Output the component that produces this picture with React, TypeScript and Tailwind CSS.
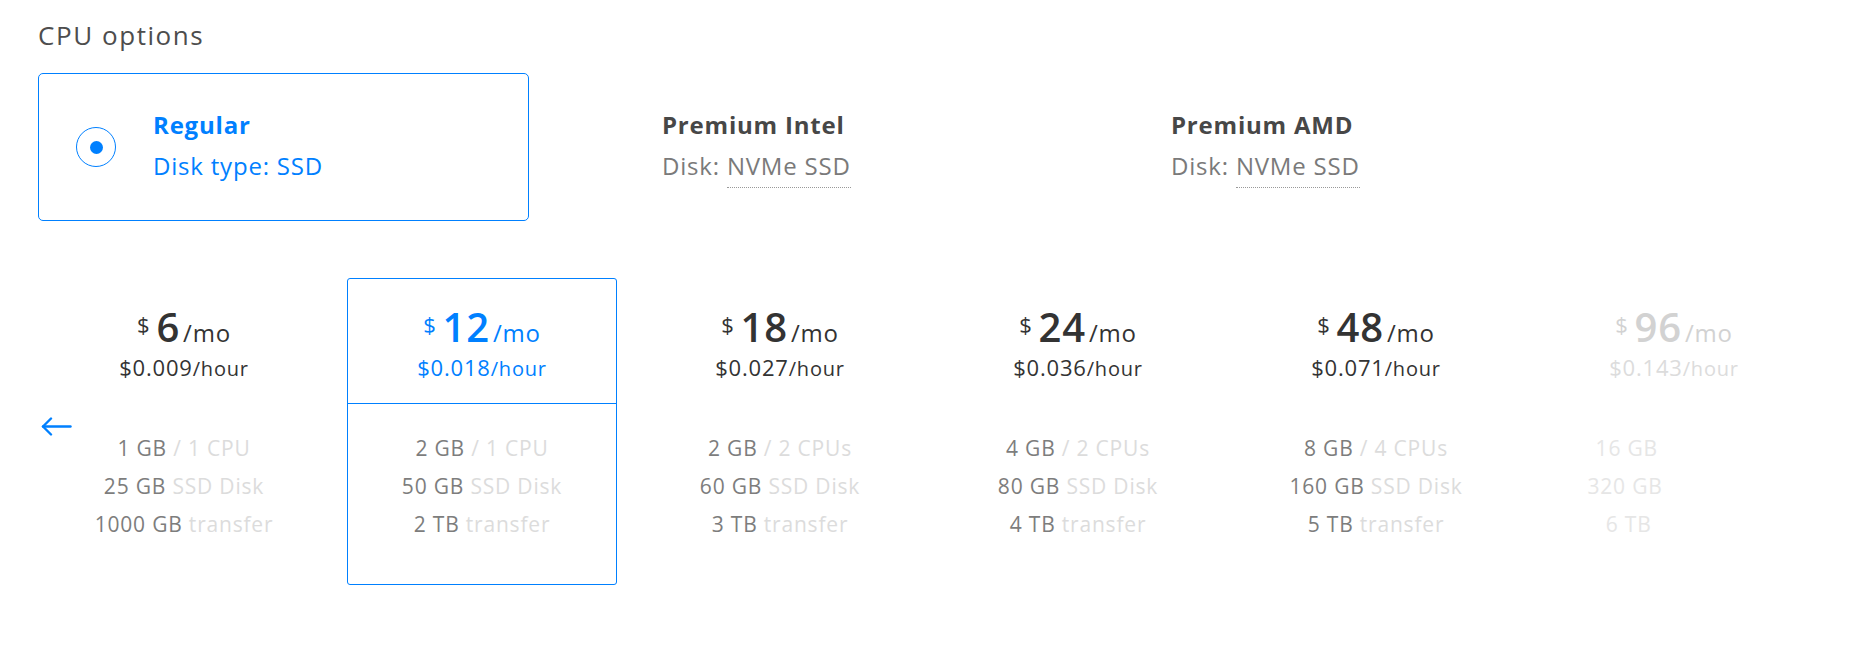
import React from 'react';

interface Plan {
  mo: number;
  hour: string;
  ram: string;
  cpu: string;
  disk: string;
  transfer: string;
}

const plans: Plan[] = [
  { mo: 6, hour: '0.009', ram: '1 GB', cpu: '1 CPU', disk: '25 GB', transfer: '1000 GB' },
  { mo: 12, hour: '0.018', ram: '2 GB', cpu: '1 CPU', disk: '50 GB', transfer: '2 TB' },
  { mo: 18, hour: '0.027', ram: '2 GB', cpu: '2 CPUs', disk: '60 GB', transfer: '3 TB' },
  { mo: 24, hour: '0.036', ram: '4 GB', cpu: '2 CPUs', disk: '80 GB', transfer: '4 TB' },
  { mo: 48, hour: '0.071', ram: '8 GB', cpu: '4 CPUs', disk: '160 GB', transfer: '5 TB' },
  { mo: 96, hour: '0.143', ram: '16 GB', cpu: '8 CPUs', disk: '320 GB', transfer: '6 TB' },
];

const cpuOptions = [
  { name: 'Regular', label: 'Disk type:', disk: 'SSD' },
  { name: 'Premium Intel', label: 'Disk:', disk: 'NVMe SSD' },
  { name: 'Premium AMD', label: 'Disk:', disk: 'NVMe SSD' },
];

function CpuOption({ name, label, disk, selected }: { name: string; label: string; disk: string; selected: boolean }) {
  return (
    <div
      className={`flex items-center h-[148px] rounded-[5px] border ${
        selected ? 'border-[#0080ff]' : 'border-transparent'
      }`}
    >
      <div className="w-[114px] shrink-0 flex justify-center">
        {selected && (
          <span className="w-[40px] h-[40px] rounded-full border border-[#0080ff] flex items-center justify-center">
            <span className="w-[13px] h-[13px] rounded-full bg-[#0080ff]" />
          </span>
        )}
      </div>
      <div>
        <div className={`text-[24px] leading-[42px] font-bold ${selected ? 'text-[#0080ff]' : 'text-[#474747]'}`}>
          {name}
        </div>
        <div className={`text-[24px] leading-[40px] pb-[4px] ${selected ? 'text-[#0080ff]' : 'text-[#7a7a7a]'}`}>
          {label}{' '}
          {selected ? (
            disk
          ) : (
            <span className="border-b border-dotted border-[#999] pb-[5px]">{disk}</span>
          )}
        </div>
      </div>
    </div>
  );
}

function PlanCard({ plan, selected, faded }: { plan: Plan; selected: boolean; faded: boolean }) {
  const priceColor = selected ? 'text-[#0080ff]' : faded ? 'text-[#d2d2d2]' : 'text-[#333]';
  const mainColor = faded ? 'text-[#e6e6e6]' : 'text-[#7d7d7d]';
  const subColor = faded ? 'text-white' : 'text-[#dcdcdc]';
  return (
    <div
      className={`w-[270px] shrink-0 rounded-[3px] border ${selected ? 'border-[#0080ff]' : 'border-transparent'}`}
    >
      <div
        className={`h-[125px] pt-[28px] text-center border-b ${
          selected ? 'border-[#0080ff]' : 'border-transparent'
        } ${priceColor}`}
      >
        <div className="text-[40px] leading-[34px]">
          <span className="text-[22px] leading-none align-[9px] mr-[6px]">$</span>
          <span className="font-semibold leading-none">{plan.mo}</span>
          <span className="text-[24px] leading-none ml-[3px]">/mo</span>
        </div>
        <div className={`mt-[5px] text-[22px] leading-[30px] ${faded ? 'text-[#dcdcdc]' : ''}`}>
          ${plan.hour}
          <span className="text-[20px]">/hour</span>
        </div>
      </div>
      <div className="h-[180px] pt-[25px] text-center text-[21px] leading-[38px]">
        <div className={mainColor}>
          {plan.ram} <span className={subColor}>/ {plan.cpu}</span>
        </div>
        <div className={mainColor}>
          {plan.disk} <span className={subColor}>SSD Disk</span>
        </div>
        <div className={mainColor}>
          {plan.transfer} <span className={subColor}>transfer</span>
        </div>
      </div>
    </div>
  );
}

export default function App() {
  return (
    <div
      className="min-h-[652px] bg-white pl-[38px] pt-[19px] tracking-[0.05em]"
      style={{ fontFamily: '"Open Sans", "Liberation Sans", sans-serif' }}
    >
      <h2 className="text-[26px] leading-[32px] tracking-[0.06em] text-[#4d4d4d]">CPU options</h2>

      <div className="mt-[22px] grid grid-cols-[491px_491px_491px] gap-[18px]">
        {cpuOptions.map((opt, i) => (
          <CpuOption key={opt.name} {...opt} selected={i === 0} />
        ))}
      </div>

      <div className="relative mt-[57px] pl-[11px] flex gap-[28px]">
        <button className="absolute left-[3px] top-[139px] text-[#0080ff]">
          <svg width="31" height="19" viewBox="0 0 31 19" fill="none" stroke="currentColor" strokeWidth="2.4" strokeLinecap="round" strokeLinejoin="round">
            <path d="M2 9.5H29.5" />
            <path d="M10 1.5L2 9.5L10 17.5" />
          </svg>
        </button>
        {plans.map((p, i) => (
          <PlanCard key={p.mo} plan={p} selected={i === 1} faded={i === 5} />
        ))}
      </div>
    </div>
  );
}
